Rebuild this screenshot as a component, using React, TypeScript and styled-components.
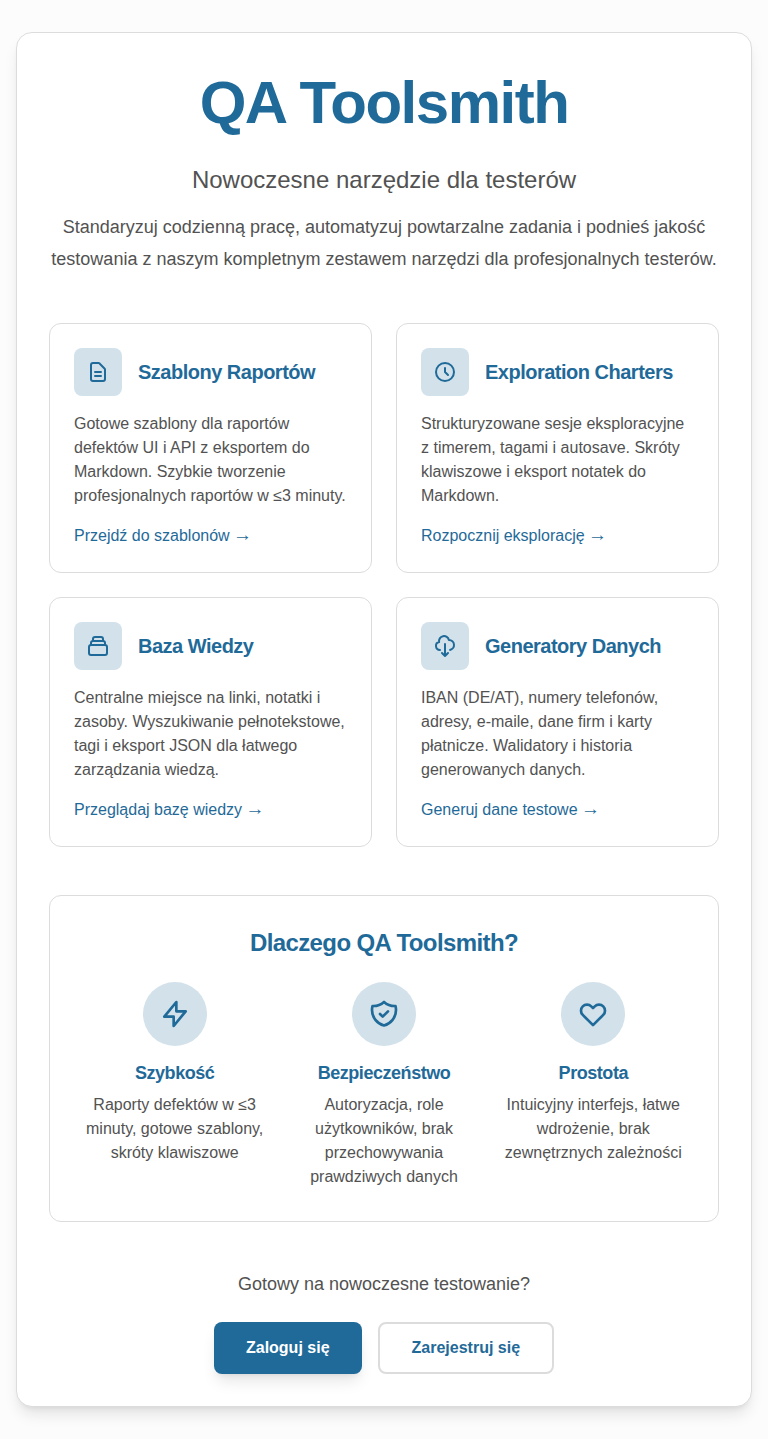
import React from 'react';
import styled, { createGlobalStyle } from 'styled-components';

const Global = createGlobalStyle`
  *, *::before, *::after { box-sizing: border-box; }
  body {
    margin: 0;
    background: #fcfcfc;
    color: #525252;
    font-family: Arial, "Liberation Sans", sans-serif;
    font-size: 16px;
    line-height: 24px;
  }
  h1, h2, h3, h4, p { margin: 0; }
`;

const Page = styled.div`
  min-height: 1439px;
  padding: 32px 16px;
`;

const Panel = styled.main`
  padding: 32px;
  background: #fff;
  border: 1px solid #dcdcdc;
  border-radius: 16px;
  box-shadow: 0 10px 15px -3px rgba(0, 0, 0, 0.1), 0 4px 6px -4px rgba(0, 0, 0, 0.1);
`;

const Hero = styled.header`
  text-align: center;
  margin-bottom: 48px;
`;

const Title = styled.h1`
  font-size: 60px;
  line-height: 75px;
  letter-spacing: -1.5px;
  font-weight: 700;
  color: #1f6a99;
  margin-bottom: 24px;
`;

const Subtitle = styled.p`
  font-size: 24px;
  line-height: 32px;
  margin-bottom: 15px;
`;

const Lead = styled.p`
  font-size: 18px;
  line-height: 32px;
`;

const Features = styled.section`
  display: grid;
  grid-template-columns: 1fr 1fr;
  gap: 24px;
  margin-bottom: 48px;
`;

const Card = styled.article`
  padding: 24px;
  border: 1px solid #dcdcdc;
  border-radius: 12px;
`;

const CardHead = styled.div`
  display: flex;
  align-items: center;
  gap: 16px;
  margin-bottom: 16px;
`;

const Tile = styled.div`
  display: flex;
  align-items: center;
  justify-content: center;
  width: 48px;
  height: 48px;
  border-radius: 8px;
  background: #d2e1ea;
  color: #1f6a99;
`;

const CardTitle = styled.h3`
  font-size: 20px;
  line-height: 27px;
  letter-spacing: -0.5px;
  color: #1f6a99;
`;

const CardText = styled.p`
  margin-bottom: 16px;
`;

const CardLink = styled.a`
  display: block;
  color: #1f6a99;
  text-decoration: none;
`;

const Arrow = styled.span`
  margin-left: -1px;
  font-family: "Liberation Serif", serif;
  font-size: 19px;
  line-height: 1;
`;

const Why = styled.section`
  padding: 32px;
  border: 1px solid #dcdcdc;
  border-radius: 12px;
  text-align: center;
  margin-bottom: 48px;
`;

const WhyTitle = styled.h2`
  font-size: 24px;
  line-height: 30px;
  letter-spacing: -0.6px;
  color: #1f6a99;
  margin-bottom: 24px;
`;

const Benefits = styled.div`
  display: grid;
  grid-template-columns: repeat(3, 1fr);
  gap: 24px;
`;

const Benefit = styled.div`
  display: flex;
  flex-direction: column;
  align-items: center;
`;

const Disc = styled(Tile)`
  width: 64px;
  height: 64px;
  border-radius: 50%;
  margin-bottom: 13px;
`;

const BenefitTitle = styled.h4`
  font-size: 18px;
  line-height: 28px;
  letter-spacing: -0.45px;
  color: #1f6a99;
  margin-bottom: 6px;
`;

const Closing = styled.footer`
  text-align: center;
`;

const Question = styled.p`
  font-size: 18px;
  line-height: 28px;
  margin-bottom: 24px;
`;

const Actions = styled.div`
  display: flex;
  justify-content: center;
  gap: 16px;
`;

const Button = styled.button<{ $primary?: boolean }>`
  height: 52px;
  padding: 0 32px;
  border: ${(p) => (p.$primary ? '0' : '2px solid #dcdcdc')};
  border-radius: 8px;
  background: ${(p) => (p.$primary ? '#1f6a99' : '#fff')};
  color: ${(p) => (p.$primary ? '#fff' : '#1f6a99')};
  font: 700 16px/24px Arial, "Liberation Sans", sans-serif;
  box-shadow: ${(p) =>
    p.$primary ? '0 10px 15px -3px rgba(0, 0, 0, 0.1), 0 4px 6px -4px rgba(0, 0, 0, 0.1)' : 'none'};
`;

const Icon = ({ d, size }: { d: string; size: number }) => (
  <svg width={size} height={size} viewBox="0 0 24 24" fill="none" stroke="currentColor" strokeWidth="2" strokeLinecap="round" strokeLinejoin="round">
    <path d={d} />
  </svg>
);

const features = [
  {
    title: 'Szablony Raportów',
    text: 'Gotowe szablony dla raportów defektów UI i API z eksportem do Markdown. Szybkie tworzenie profesjonalnych raportów w ≤3 minuty.',
    link: 'Przejdź do szablonów',
    d: 'M9 12h6m-6 4h6m2 5H7a2 2 0 01-2-2V5a2 2 0 012-2h5.586a1 1 0 01.707.293l5.414 5.414a1 1 0 01.293.707V19a2 2 0 01-2 2z',
  },
  {
    title: 'Exploration Charters',
    text: 'Strukturyzowane sesje eksploracyjne z timerem, tagami i autosave. Skróty klawiszowe i eksport notatek do Markdown.',
    link: 'Rozpocznij eksplorację',
    d: 'M12 8v4l3 3m6-3a9 9 0 11-18 0 9 9 0 0118 0z',
  },
  {
    title: 'Baza Wiedzy',
    text: 'Centralne miejsce na linki, notatki i zasoby. Wyszukiwanie pełnotekstowe, tagi i eksport JSON dla łatwego zarządzania wiedzą.',
    link: 'Przeglądaj bazę wiedzy',
    d: 'M19 11H5m14 0a2 2 0 012 2v6a2 2 0 01-2 2H5a2 2 0 01-2-2v-6a2 2 0 012-2m14 0V9a2 2 0 00-2-2M5 11V9a2 2 0 012-2m0 0V5a2 2 0 012-2h6a2 2 0 012 2v2M7 7h10',
  },
  {
    title: 'Generatory Danych',
    text: 'IBAN (DE/AT), numery telefonów, adresy, e-maile, dane firm i karty płatnicze. Walidatory i historia generowanych danych.',
    link: 'Generuj dane testowe',
    d: 'M7 16a4 4 0 01-.88-7.903A5 5 0 1115.9 6L16 6a5 5 0 011 9.9M9 19l3 3m0 0l3-3m-3 3V10',
  },
];

const benefits = [
  {
    title: 'Szybkość',
    text: 'Raporty defektów w ≤3 minuty, gotowe szablony, skróty klawiszowe',
    d: 'M13 10V3L4 14h7v7l9-11h-7z',
  },
  {
    title: 'Bezpieczeństwo',
    text: 'Autoryzacja, role użytkowników, brak przechowywania prawdziwych danych',
    d: 'M9 12l2 2 4-4m5.618-4.016A11.955 11.955 0 0112 2.944a11.955 11.955 0 01-8.618 3.04A12.02 12.02 0 003 9c0 5.591 3.824 10.29 9 11.622 5.176-1.332 9-6.03 9-11.622 0-1.042-.133-2.052-.382-3.016z',
  },
  {
    title: 'Prostota',
    text: 'Intuicyjny interfejs, łatwe wdrożenie, brak zewnętrznych zależności',
    d: 'M4.318 6.318a4.5 4.5 0 000 6.364L12 20.364l7.682-7.682a4.5 4.5 0 00-6.364-6.364L12 7.636l-1.318-1.318a4.5 4.5 0 00-6.364 0z',
  },
];

export default function App() {
  return (
    <Page>
      <Global />
      <Panel>
        <Hero>
          <Title>QA Toolsmith</Title>
          <Subtitle>Nowoczesne narzędzie dla testerów</Subtitle>
          <Lead>
            Standaryzuj codzienną pracę, automatyzuj powtarzalne zadania i podnieś jakość testowania z naszym
            kompletnym zestawem narzędzi dla profesjonalnych testerów.
          </Lead>
        </Hero>
        <Features>
          {features.map((f) => (
            <Card key={f.title}>
              <CardHead>
                <Tile>
                  <Icon d={f.d} size={24} />
                </Tile>
                <CardTitle>{f.title}</CardTitle>
              </CardHead>
              <CardText>{f.text}</CardText>
              <CardLink>
                {f.link} <Arrow>→</Arrow>
              </CardLink>
            </Card>
          ))}
        </Features>
        <Why>
          <WhyTitle>Dlaczego QA Toolsmith?</WhyTitle>
          <Benefits>
            {benefits.map((b) => (
              <Benefit key={b.title}>
                <Disc>
                  <Icon d={b.d} size={32} />
                </Disc>
                <BenefitTitle>{b.title}</BenefitTitle>
                <p>{b.text}</p>
              </Benefit>
            ))}
          </Benefits>
        </Why>
        <Closing>
          <Question>Gotowy na nowoczesne testowanie?</Question>
          <Actions>
            <Button $primary>Zaloguj się</Button>
            <Button>Zarejestruj się</Button>
          </Actions>
        </Closing>
      </Panel>
    </Page>
  );
}
